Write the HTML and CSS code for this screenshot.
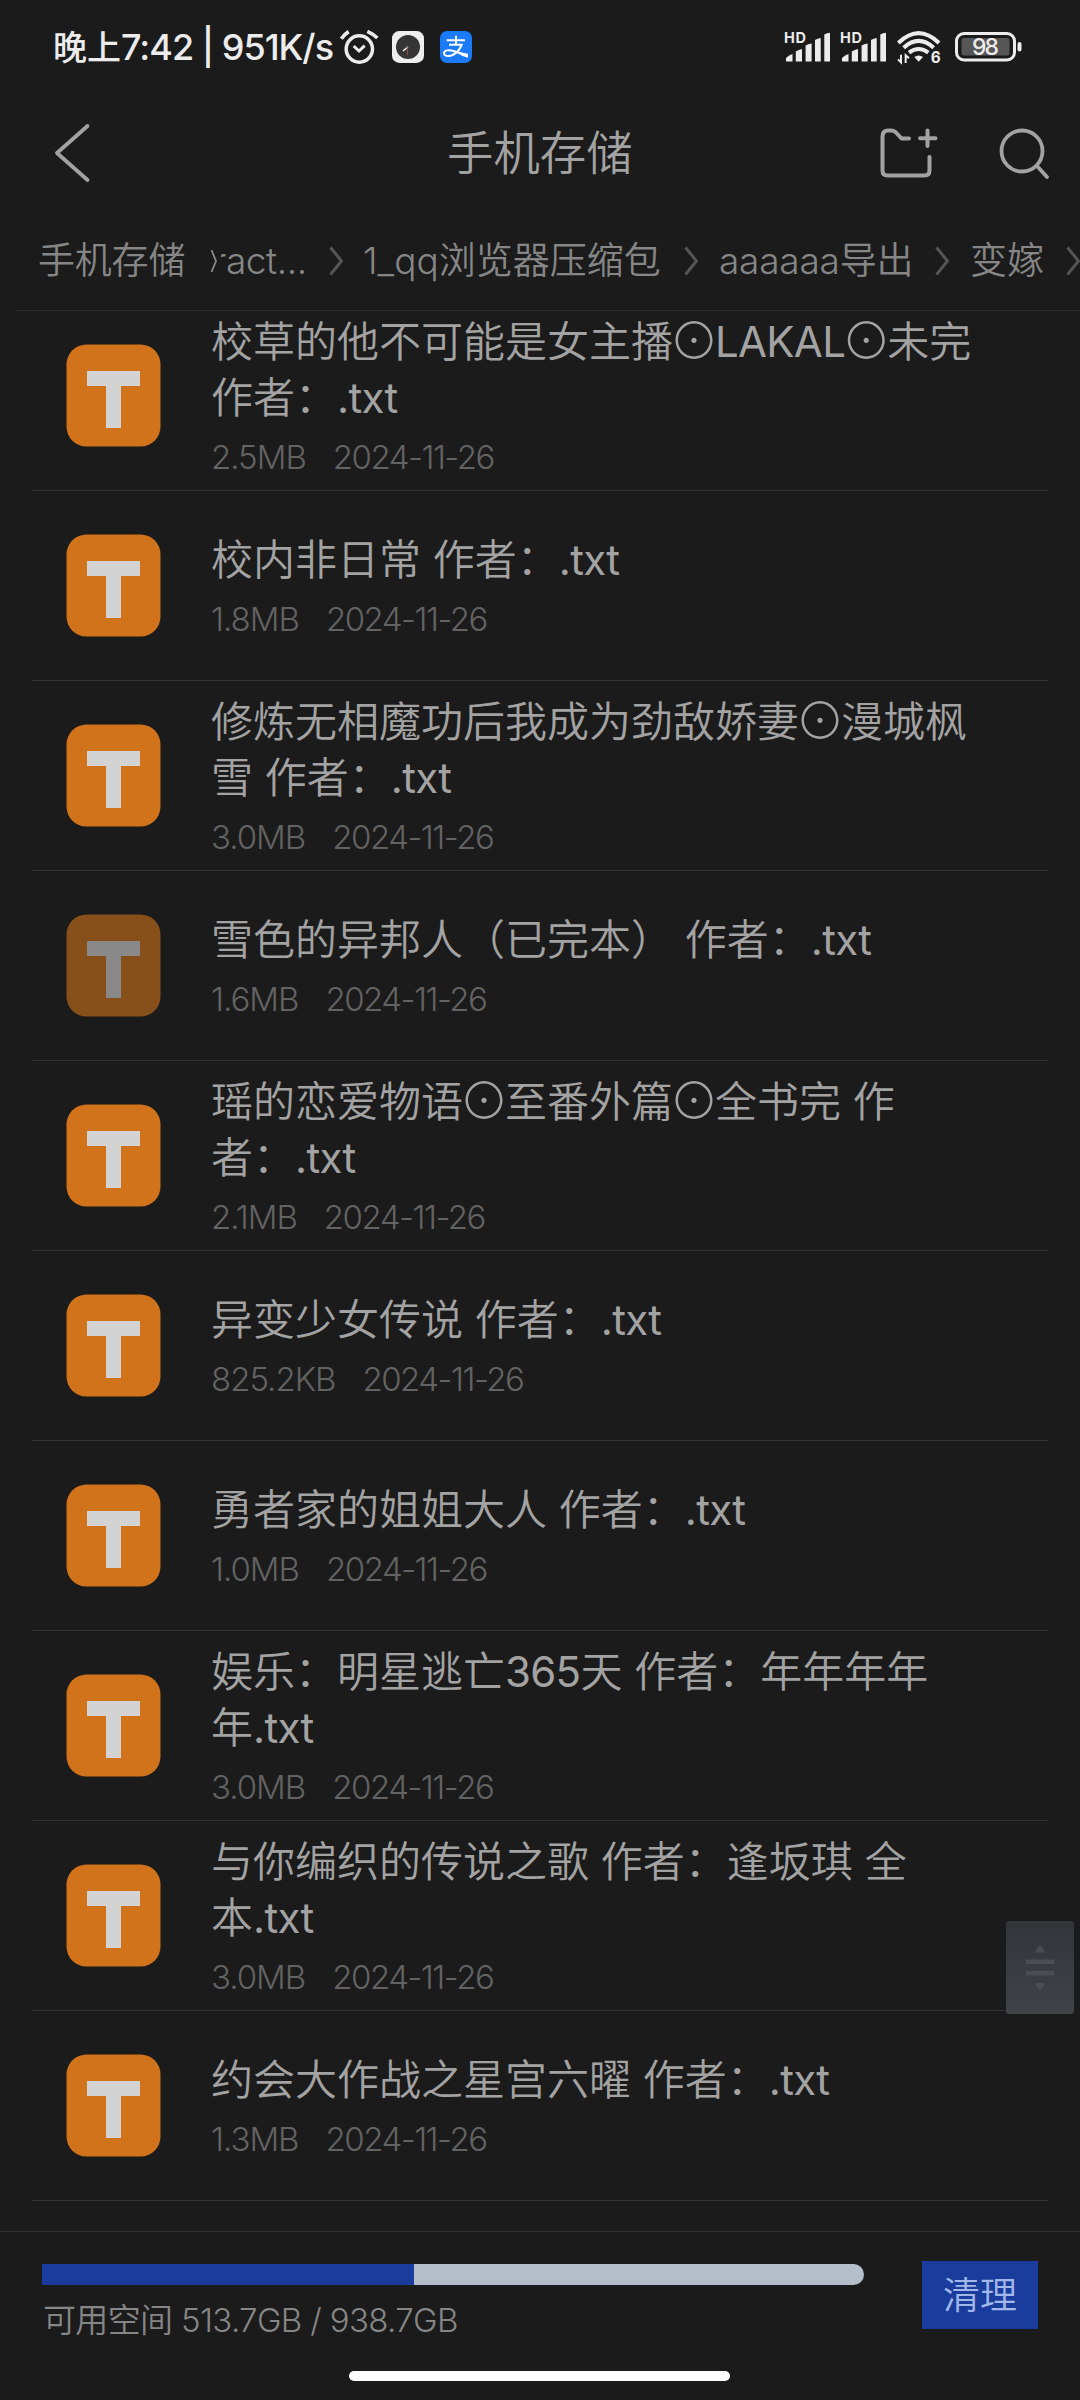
FILE: index.html
```
<!DOCTYPE html>
<html lang="zh-CN">
<head>
<meta charset="utf-8">
<title>手机存储</title>
<link rel="stylesheet" href="styles.css">
</head>
<body>
<svg class="defs" width="0" height="0" aria-hidden="true">
  <symbol id="file-txt" viewBox="0 0 95 103">
    <rect x="0.5" y="0.5" width="94" height="102" rx="20" fill="#d0731a"/>
    <path d="M21 27H74V42H55V84H40V42H21Z" fill="#d3d3d3"/>
  </symbol>
  <symbol id="chevron" viewBox="0 0 14 30">
    <path d="M1.5 1.5L12.5 15L1.5 28.5" fill="none" stroke="#555" stroke-width="3"/>
  </symbol>
  <symbol id="bars" viewBox="0 0 48 32">
    <path d="M2 30.500V27Q5 24 8.500 23V30.500Z M11.800 30.500V20.500Q14.500 18.500 18 18V30.500Z M21.600 30.500V14.500Q24 13 27.600 12.500V30.500Z M31 30.500V9Q33.500 7.500 36.700 7V30.500Z M40.300 30.500V3.500Q43 2 46 1.800V30.500Z" fill="#ececec"/>
  </symbol>
</svg>

<main class="screen">
  <div class="status">
    <span class="status-text"><span class="cjk">晚上</span>7:42 | 951K/s</span>
    <svg class="alarm" width="40" height="36" viewBox="30 24 120 108" fill="none" stroke="#ececec">
      <circle cx="88" cy="84" r="39.500" stroke-width="10.500"/>
      <path d="M34 53Q42 41 56 32M112 31Q128 38 142 51" stroke-width="11"/>
      <path d="M71 75L87 90L104 74" stroke-width="9"/>
    </svg>
    <svg class="clock" width="32" height="32" viewBox="0 0 96 96">
      <rect width="96" height="96" rx="22" fill="#eeeeee"/>
      <circle cx="48" cy="48" r="36" fill="#353535"/>
      <path d="M33 60L48 47" stroke="#fff" stroke-width="4"/>
      <path d="M46 47V72" stroke="#a04c44" stroke-width="3"/>
    </svg>
    <svg class="pay" width="32" height="32" viewBox="0 0 96 96">
      <rect width="96" height="96" rx="21" fill="#1b7af6"/>
      <path d="M48 14V41M20 28H75M27 41H65Q58 62 38 72C22 79 8 73 13 63C20 52 42 60 84 74" fill="none" stroke="#fff" stroke-width="6"/>
      <path d="M48 60Q66 66 84 68V80Q66 76 52 66Z" fill="#fff"/>
    </svg>
    <div class="status-right">
      <svg width="48" height="32"><use href="#bars"/><text x="0" y="11.600" font-size="14.500" textLength="22">HD</text></svg>
      <svg class="sim2" width="48" height="32"><use href="#bars"/><text x="0" y="11.600" font-size="14.500" textLength="22">HD</text></svg>
      <svg class="wifi" width="44" height="34" viewBox="355 31 132 102" fill="none" stroke="#ececec" stroke-width="12">
        <path d="M359 70Q420 11 481 70M375 84Q420 43 465 84M391 99Q420 77 449 99"/>
        <path d="M407 112Q420 103 433 112L420 126Z" fill="#ececec" stroke="none"/>
        <path d="M367 105V128L358 119M381 130V107L391 116" stroke-width="6"/>
        <text x="456" y="130" font-size="46" stroke="none">6</text>
      </svg>
      <svg class="battery" width="67" height="31" viewBox="0 0 67 31">
        <rect x="1.500" y="1.500" width="58" height="26.500" rx="7.500" fill="none" stroke="#ececec" stroke-width="3"/>
        <rect x="6.500" y="6" width="48" height="17.500" rx="2.500" fill="#565656"/>
        <rect x="62.500" y="10" width="4" height="9.500" rx="2" fill="#ececec"/>
        <text class="level" x="30.500" y="23" font-size="23" text-anchor="middle" textLength="27">98</text>
      </svg>
    </div>
  </div>

  <header class="appbar">
    <svg class="back" width="36" height="60" viewBox="0 0 36 60"><path d="M33.500 3L3 30L33.500 57" fill="none" stroke="#a2a2a2" stroke-width="3.800" stroke-linecap="round" stroke-linejoin="round"/></svg>
    <h1>手机存储</h1>
    <svg class="folder" width="58" height="50" viewBox="0 0 58 50" fill="none" stroke="#a2a2a2" stroke-width="4" stroke-linecap="round" stroke-linejoin="round">
      <path d="M29 10.500H21.500L15.500 4Q13.500 2.500 11 2.500H7.500Q2.500 3 2.500 8.500V42.500Q2.500 47.500 7.500 47.500H44.500Q49.500 47.500 49.500 42.500V29"/>
      <path d="M47.500 2.500V18M40 10.300H55.500"/>
    </svg>
    <svg class="search" width="52" height="52" viewBox="0 0 52 52" fill="none" stroke="#a2a2a2" stroke-width="3.800" stroke-linecap="round"><circle cx="24" cy="24" r="20.500"/><path d="M39 39L49 50"/></svg>
  </header>

  <nav class="crumbs">
    <span class="crumb root">手机存储</span>
    <svg class="cut-chevron" width="7" height="24" viewBox="0 0 7 24"><path d="M0.500 1L5 12L0.500 23" fill="none" stroke="#8a8a8a" stroke-width="1.800"/></svg>
    <span class="crumb clipped">ract...</span>
    <svg class="sep" width="14" height="30"><use href="#chevron"/></svg>
    <span class="crumb qq">1_qq浏览器压缩包</span>
    <svg class="sep" width="14" height="30"><use href="#chevron"/></svg>
    <span class="crumb export">aaaaaa导出</span>
    <svg class="sep" width="14" height="30"><use href="#chevron"/></svg>
    <span class="crumb last">变嫁</span>
    <svg class="sep" width="14" height="30"><use href="#chevron"/></svg>
  </nav>

  <section class="list">
    <article class="row"><svg class="icon"><use href="#file-txt"/></svg><div class="info"><h2>校草的他不可能是女主播<i>⊙</i><b>LAKAL</b><i>⊙</i>未完<br>作者：<b>.txt</b></h2><p><span>2.5MB</span><time>2024-11-26</time></p></div></article>
    <article class="row"><svg class="icon"><use href="#file-txt"/></svg><div class="info"><h2>校内非日常 作者：<b>.txt</b></h2><p><span>1.8MB</span><time>2024-11-26</time></p></div></article>
    <article class="row"><svg class="icon"><use href="#file-txt"/></svg><div class="info"><h2>修炼无相魔功后我成为劲敌娇妻<i>⊙</i>漫城枫<br>雪 作者：<b>.txt</b></h2><p><span>3.0MB</span><time>2024-11-26</time></p></div></article>
    <article class="row"><svg class="icon dim"><use href="#file-txt"/></svg><div class="info"><h2>雪色的异邦人（已完本） 作者：<b>.txt</b></h2><p><span>1.6MB</span><time>2024-11-26</time></p></div></article>
    <article class="row"><svg class="icon"><use href="#file-txt"/></svg><div class="info"><h2>瑶的恋爱物语<i>⊙</i>至番外篇<i>⊙</i>全书完 作<br>者：<b>.txt</b></h2><p><span>2.1MB</span><time>2024-11-26</time></p></div></article>
    <article class="row"><svg class="icon"><use href="#file-txt"/></svg><div class="info"><h2>异变少女传说 作者：<b>.txt</b></h2><p><span>825.2KB</span><time>2024-11-26</time></p></div></article>
    <article class="row"><svg class="icon"><use href="#file-txt"/></svg><div class="info"><h2>勇者家的姐姐大人 作者：<b>.txt</b></h2><p><span>1.0MB</span><time>2024-11-26</time></p></div></article>
    <article class="row"><svg class="icon"><use href="#file-txt"/></svg><div class="info"><h2>娱乐：明星逃亡<b>365</b>天 作者：年年年年<br>年<b>.txt</b></h2><p><span>3.0MB</span><time>2024-11-26</time></p></div></article>
    <article class="row"><svg class="icon"><use href="#file-txt"/></svg><div class="info"><h2>与你编织的传说之歌 作者：逢坂琪 全<br>本<b>.txt</b></h2><p><span>3.0MB</span><time>2024-11-26</time></p></div></article>
    <article class="row"><svg class="icon"><use href="#file-txt"/></svg><div class="info"><h2>约会大作战之星宫六曜 作者：<b>.txt</b></h2><p><span>1.3MB</span><time>2024-11-26</time></p></div></article>
    <svg class="scroller" width="68" height="93" viewBox="0 0 68 93" fill="#4a4d51">
      <path d="M34 24L39.500 31.500H28.500Z M20 38.500H48.500V43H20Z M20 50H48.500V54.500H20Z M28.500 62H39.500L34 70Z"/>
    </svg>
  </section>

  <footer class="storage">
    <div class="usage">
      <div class="bar"><div class="used" style="width:45.3%"></div></div>
      <p>可用空间 513.7GB / 938.7GB</p>
    </div>
    <button class="clean">清理</button>
  </footer>
  <div class="home"></div>
</main>
</body>
</html>
```
FILE: styles.css
```
* { box-sizing: border-box; margin: 0; padding: 0; }
body { background: #1b1b1b; }
.defs { position: absolute; }
.screen {
  width: 1080px; height: 2400px; overflow: hidden;
  display: flex; flex-direction: column;
  background: #1b1b1b; color: #a3a3a3;
  font-family: Inter, "Noto Sans CJK SC", sans-serif; font-weight: 350;
}
svg { display: block; flex: none; overflow: visible; }
svg text { font-family: Inter, sans-serif; font-weight: 700; fill: #ececec; }
svg text.level { font-weight: 500; }

.status { height: 94px; padding-left: 53px; display: flex; align-items: center; }
.status-text { width: 287px; white-space: nowrap; font-size: 36px; line-height: 44px; font-weight: 500; letter-spacing: -1px; color: #ececec; }
.status-text .cjk { font-size: 34px; letter-spacing: 0; }
.clock { margin-left: 12px; }
.pay { margin-left: 16px; }
.status-right { margin-left: auto; padding-right: 58px; display: flex; align-items: center; }
.sim2 { margin-left: 8px; }
.wifi { margin-left: 9px; }
.battery { margin-left: 14px; }

.appbar { height: 118px; padding-left: 54px; display: flex; align-items: center; }
.appbar h1 { width: 190px; margin-left: 357px; font-size: 46.4px; line-height: 64px; font-weight: 350; white-space: nowrap; }
.folder { margin-left: 243px; }
.search { margin-left: 60px; }

.crumbs { height: 99px; margin-left: 16px; padding-left: 22px; display: flex; align-items: center; border-bottom: 1px solid #2d2d2d; color: #868686; }
.crumb { flex: none; font-size: 37px; line-height: 56px; white-space: nowrap; }
.root { width: 173px; letter-spacing: -0.2px; }
.cut-chevron { margin-right: 3px; }
.clipped { width: 108px; text-indent: -8px; letter-spacing: -0.4px; clip-path: polygon(0 0, 100% 0, 100% 100%, 6px 100%, 6px 26px, 0 26px); }
.qq { margin-left: 20px; width: 321px; }
.export { margin-left: 21px; width: 216px; letter-spacing: -0.2px; }
.last { margin-left: 21px; width: 96px; }

.list { height: 1920px; position: relative; overflow: hidden; }
.row { height: 190px; margin: 0 32px; padding-left: 34px; display: flex; align-items: center; border-bottom: 1px solid #333; }
.row:first-child { margin-top: -10px; }
.icon { width: 95px; height: 103px; margin-top: -1px; }
.dim { opacity: .6; }
.info { margin-left: 50px; }
.info h2 { font-size: 42px; line-height: 56px; font-weight: 350; white-space: nowrap; }
.info b { font-weight: 400; letter-spacing: -0.7px; }
.info i { display: inline-block; width: 42px; font-style: normal; font-size: 50px; line-height: 0; font-weight: 300; text-indent: -4px; vertical-align: -2px; }
.info p { margin: 11px 0 1px; display: flex; gap: 27px; font-size: 33px; line-height: 40px; color: #636363; letter-spacing: -1px; }
.info time { letter-spacing: -1.5px; }
.scroller { position: absolute; top: 1610px; right: 6px; border-radius: 3px; background: linear-gradient(#32363a, #3f4246); }

.storage { height: 140px; padding: 29px 42px 0; display: flex; border-top: 1px solid #303030; }
.usage { width: 822px; padding-top: 3px; }
.bar { height: 21px; border-radius: 0 11px 11px 0; background: #b5bfcc; overflow: hidden; }
.used { height: 100%; background: #1a3c9c; }
.usage p { margin: 15px 0 0 1px; font-size: 33px; line-height: 40px; letter-spacing: -0.65px; color: #868686; }
.clean { width: 116px; height: 68px; margin-left: auto; padding-top: 2px; border: 0; background: #1a3c9c; color: #a3b8ea; font: 350 37px/66px Inter, "Noto Sans CJK SC", sans-serif; }
.home { width: 381px; height: 10px; margin-left: 349px; border-radius: 5px; background: #fff; }
```
